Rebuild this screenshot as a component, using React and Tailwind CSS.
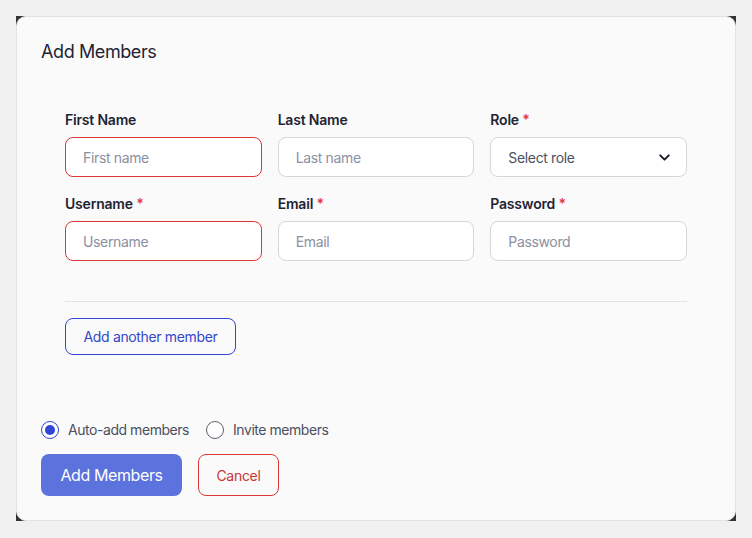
import { ChevronDown } from "lucide-react";

const fields = [
  { label: "First Name", placeholder: "First name", error: true },
  { label: "Last Name", placeholder: "Last name" },
  { label: "Role", placeholder: "Select role", required: true, select: true },
  { label: "Username", placeholder: "Username", required: true, error: true },
  { label: "Email", placeholder: "Email", required: true },
  { label: "Password", placeholder: "Password", required: true },
];

function Field({ label, placeholder, required, error, select }) {
  return (
    <div>
      <label className="block text-[14px] leading-[20px] font-semibold text-[#1f2433] tracking-[-0.2px] mb-[7px]">
        {label} {required && <span className="text-[#e03a3a]">*</span>}
      </label>
      <div
        className={`h-[40px] rounded-lg bg-white border flex items-center justify-between pl-[17px] pr-[13px] ${
          error ? "border-[#d93636]" : "border-[#d4d6de]"
        }`}
      >
        <span className={`text-[14px] tracking-[-0.35px] ${select ? "text-[#4b5160]" : "text-[#8b90a0]"}`}>
          {placeholder}
        </span>
        {select && <ChevronDown size={17} strokeWidth={2.75} className="text-[#1a1d26]" />}
      </div>
    </div>
  );
}

function Radio({ checked, label }) {
  return (
    <label className="flex items-center gap-[9px]">
      <span
        className={`w-[18px] h-[18px] rounded-full border flex items-center justify-center bg-white ${
          checked ? "border-[#2f45d6] border-[1.5px]" : "border-[#5b5f6a]"
        }`}
      >
        {checked && <span className="w-[10px] h-[10px] rounded-full bg-[#2f45d6]" />}
      </span>
      <span className="text-[14px] text-[#4b5060] tracking-[-0.45px]">{label}</span>
    </label>
  );
}

export default function App() {
  return (
    <div
      className="w-[752px] h-[538px] bg-[#f0f0f0] pt-[16px] pl-[16px]"
      style={{ fontFamily: "Inter, 'Noto Sans', sans-serif" }}
    >
      <div className="w-[720px] h-[505px] bg-[#333333]">
        <div className="w-full h-full bg-[#fafafa] border border-[#e3e3e6] rounded-[10px] p-6 flex flex-col">
          <h2 className="text-[18px] leading-[22px] text-[#1f2433] tracking-[-0.4px]">Add Members</h2>

          <div className="mt-[23px] px-6 pt-6 pb-6">
            <div className="grid grid-cols-3 gap-x-4 gap-y-[17px]">
              {fields.map((f) => (
                <Field key={f.label} {...f} />
              ))}
            </div>
            <div className="h-px bg-[#e4e4e7] mt-[40px]" />
            <button className="mt-[16px] h-[37px] w-[171px] rounded-lg border border-[#2f45d6] text-[#3446cc] text-[14px] tracking-[-0.35px]">
              Add another member
            </button>
          </div>

          <div className="mt-auto">
            <div className="flex items-center gap-[17px] mb-[14px]">
              <Radio checked label="Auto-add members" />
              <Radio label="Invite members" />
            </div>
            <div className="flex gap-4">
              <button className="h-[42px] w-[141px] rounded-lg bg-[#5c72dd] text-white text-[16px] tracking-[-0.4px]">
                Add Members
              </button>
              <button className="h-[42px] w-[81px] rounded-lg border border-[#d93636] text-[#c93535] text-[14px] tracking-[-0.3px]">
                Cancel
              </button>
            </div>
          </div>
        </div>
      </div>
    </div>
  );
}
